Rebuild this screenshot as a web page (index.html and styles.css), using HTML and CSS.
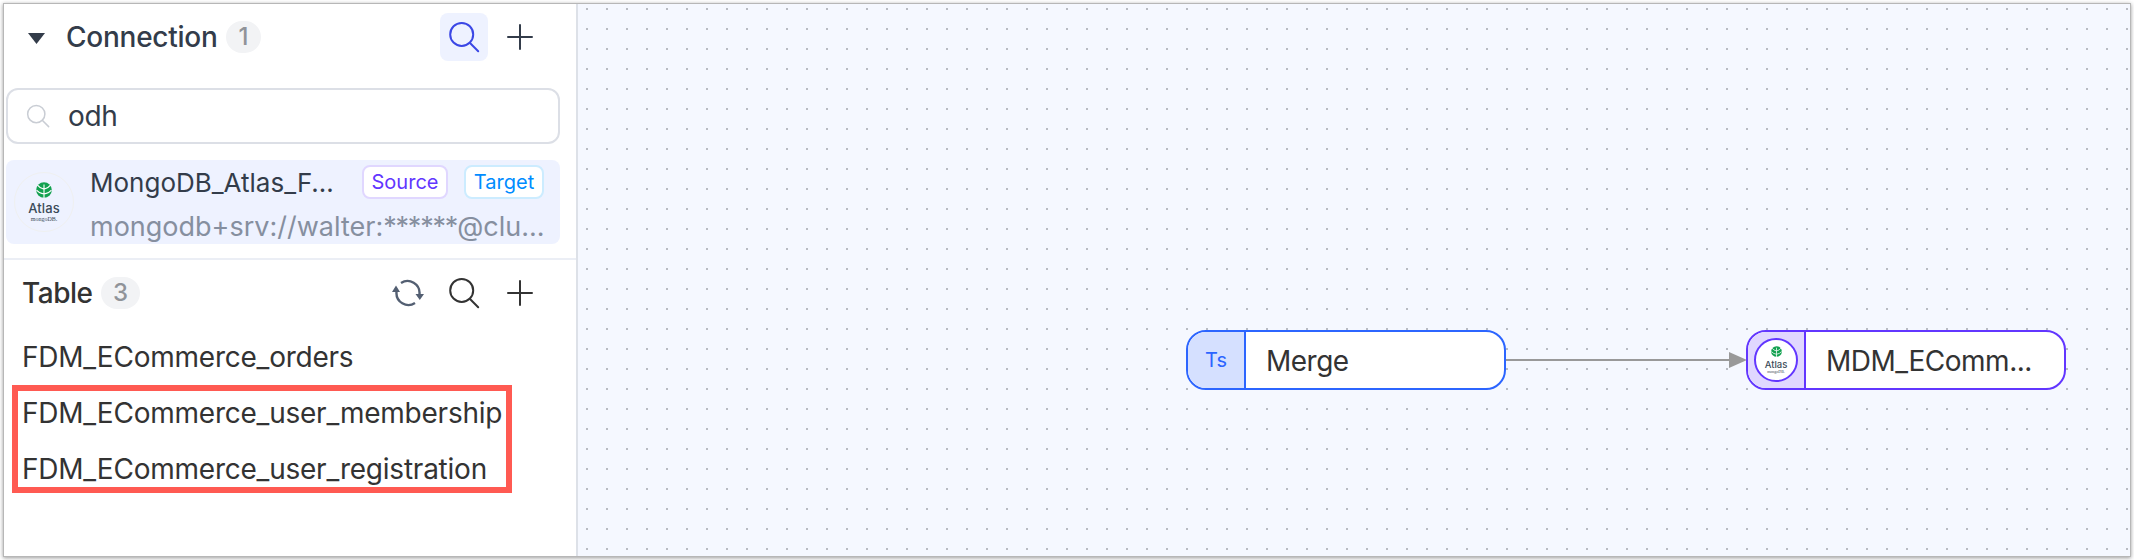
FILE: index.html
```html
<!DOCTYPE html>
<html lang="en">
<head>
<meta charset="utf-8">
<title>Pipeline editor</title>
<link rel="stylesheet" href="styles.css">
</head>
<body>
<svg class="defs" width="0" height="0">
  <symbol id="search" viewBox="0 0 32 32"><circle cx="13.7" cy="13.4" r="11.5"/><path d="M22 22l8.2 8.2"/></symbol>
  <symbol id="plus" viewBox="0 0 26 26"><path d="M1 13h24M13 1v24"/></symbol>
  <symbol id="leaf" viewBox="0 0 16 16">
    <circle cx="8" cy="8" r="7.8" fill="#12a150"/>
    <path d="M8 2.5V16M8 7.2Q4 6.500 1.500 3.2M8 7.2q4-.7 6.500-4M8 12Q3.500 11.500.5 8M8 12q4.500-.5 7.500-4" fill="none" stroke="#fff" stroke-width="1.1"/>
  </symbol>
</svg>
<main class="window">
  <aside class="sidebar">
    <header class="head head-connection">
      <svg class="caret" viewBox="0 0 17 11"><path d="M0 0h17L8.500 11z"/></svg>
      <h2 class="title title-connection">Connection</h2>
      <span class="count">1</span>
      <div class="actions">
        <button class="btn active"><svg class="icon-search"><use href="#search"/></svg></button>
        <button class="btn"><svg class="icon-plus"><use href="#plus"/></svg></button>
      </div>
    </header>
    <div class="search-box">
      <svg class="icon-search small"><use href="#search"/></svg>
      <span class="query">odh</span>
    </div>
    <div class="connection">
      <div class="logo"><svg class="leaf"><use href="#leaf"/></svg><span class="logo-name">Atlas</span><span class="logo-sub">mongoDB.</span></div>
      <div class="info">
        <div class="info-top">
          <span class="conn-name">MongoDB_Atlas_F...</span>
          <span class="tag source">Source</span>
          <span class="tag target">Target</span>
        </div>
        <div class="uri">mongodb+srv://walter:<span class="mask">******</span>@clu...</div>
      </div>
    </div>
    <section class="tables">
      <header class="head head-table">
        <h2 class="title title-table">Table</h2>
        <span class="count wide">3</span>
        <div class="actions">
          <button class="btn"><svg class="icon-refresh" viewBox="0 0 32 28"><path class="arc" d="M9 4a12 12 0 0 1 18.500 11M23 24A12 12 0 0 1 4.500 13"/><path class="tip" d="M23.500 15H32l-4.200 6zM0 13h8L4 6.500z"/></svg></button>
          <button class="btn"><svg class="icon-search"><use href="#search"/></svg></button>
          <button class="btn"><svg class="icon-plus"><use href="#plus"/></svg></button>
        </div>
      </header>
      <ul class="rows">
        <li class="row orders">FDM_ECommerce_orders</li>
        <li class="row membership">FDM_ECommerce_user_membership</li>
        <li class="row registration">FDM_ECommerce_user_registration</li>
      </ul>
      <div class="highlight"></div>
    </section>
  </aside>
  <section class="canvas">
    <svg class="edge" viewBox="0 0 242 20"><path class="wire" d="M0 10h226"/><path class="arrow" d="M223 2l18 8-18 8z"/></svg>
    <div class="node merge"><span class="node-icon">Ts</span><span class="node-name">Merge</span></div>
    <div class="node mdm"><span class="node-icon"><span class="ring"><svg class="leaf"><use href="#leaf"/></svg><span class="logo-name">Atlas</span><span class="logo-sub">mongoDB.</span></span></span><span class="node-name">MDM_EComm...</span></div>
  </section>
</main>
</body>
</html>
```
FILE: styles.css
```css
* { box-sizing: border-box; }
body { margin: 0; padding: 4px; width: 2134px; height: 560px; background: #fff; overflow: hidden; font-family: Inter, "Liberation Sans", sans-serif; color: #333; }
.defs { position: absolute; }
.window { display: flex; width: 2126px; height: 552px; background: #fff; box-shadow: 0 0 0 1px #b7b7b7, 0 1px 4px 1px rgba(0,0,0,.4); }
.sidebar { width: 574px; height: 552px; border-right: 2px solid #dde1e8; flex: none; }
.head { display: flex; align-items: center; padding-right: 32px; }
.head-connection { height: 66px; padding-left: 24px; }
.caret { width: 17px; height: 11px; fill: #333c4a; margin-right: 21px; margin-top: 2px; }
.title { margin: 0; font-size: 28px; line-height: 36px; font-weight: 500; letter-spacing: -.25px; white-space: nowrap; }
.title-connection { width: 152px; color: #333c4a; }
.title-table { width: 71px; letter-spacing: -.5px; }
.count { height: 32px; width: 35px; margin-left: 8px; border-radius: 16px; background: #f2f3f5; color: #909399; font-size: 24px; font-weight: 500; line-height: 32px; text-align: center; }
.count.wide { width: 39px; }
.actions { display: flex; gap: 8px; margin-left: auto; }
.btn { width: 48px; height: 48px; padding: 0; border: 0; border-radius: 8px; background: none; display: flex; align-items: center; justify-content: center; color: #333; }
.head-connection .btn { color: #333c4a; }
.head-connection .btn.active { background: #eef2ff; color: #3b47e5; }
.icon-search { width: 32px; height: 32px; fill: none; stroke: currentColor; stroke-width: 2; stroke-linecap: round; }
.icon-plus { width: 26px; height: 26px; fill: none; stroke: currentColor; stroke-width: 2; stroke-linecap: round; }
.icon-refresh { width: 32px; height: 28px; }
.arc { fill: none; stroke: #535f72; stroke-width: 2.400; }
.tip { fill: #535f72; }
.search-box { margin: 18px 16px 0 2px; height: 56px; border: 2px solid #dcdfe6; border-radius: 12px; display: flex; align-items: center; padding-left: 18px; color: #333c4a; font-size: 28px; }
.query { letter-spacing: -.3px; }
.icon-search.small { width: 24px; height: 24px; color: #c9cdd4; margin-right: 18px; }
.connection { margin: 16px 16px 0 2px; height: 84px; border-radius: 8px; background: #eef2ff; display: flex; padding: 0 16px 0 8px; }
.logo { width: 60px; height: 60px; margin-top: 12px; border: 1px solid #eff0f0; border-radius: 50%; flex: none; display: flex; flex-direction: column; align-items: center; color: #3b4b59; }
.leaf { flex: none; }
.logo .leaf { width: 16px; height: 16px; margin-top: 9px; }
.logo-name { font-size: 13px; line-height: 15px; }
.logo .logo-name { margin-top: 3px; font-weight: 500; letter-spacing: .1px; }
.logo-sub { font: 6px/6px "Liberation Serif", serif; }
.info { margin-left: 16px; width: 454px; flex: none; }
.info-top { display: flex; height: 44px; align-items: center; }
.conn-name { width: 272px; flex: none; font-size: 26px; color: #333c4a; white-space: nowrap; }
.tag { flex: none; height: 34px; border: 2px solid; border-radius: 8px; background: #fff; font-size: 20px; line-height: 30px; text-align: center; }
.source { width: 86px; color: #6236ff; border-color: #e0d7ff; }
.target { width: 80px; margin-left: 16px; color: #008cff; border-color: #ccecff; }
.uri { padding-top: 1px; font-size: 27px; line-height: 43px; color: #868f9f; white-space: nowrap; }
.mask { letter-spacing: -1.2px; }
.tables { position: relative; margin-top: 14px; border-top: 2px solid #ebeef5; }
.head-table { height: 66px; padding-left: 18px; }
.rows { margin: 3px 0 0; padding: 0 0 0 18px; list-style: none; }
.row { height: 56px; line-height: 56px; font-size: 28px; letter-spacing: -.23px; white-space: nowrap; }
.highlight { position: absolute; left: 8px; top: 125px; width: 500px; height: 108px; border: 6px solid #ff5a52; }
.canvas { position: relative; flex: 1; height: 552px; background: #f5f8ff conic-gradient(from 270deg at 2px 2px, #b8bbc2 90deg, transparent 0) 8px 4px / 20px 20px; overflow: hidden; }
.node { position: absolute; top: 326px; width: 320px; height: 60px; display: flex; border: 2px solid; border-radius: 20px; overflow: hidden; background: #fff; }
.merge { left: 608px; border-color: #2c65ff; }
.mdm { left: 1168px; border-color: #6236ff; }
.node-icon { width: 58px; flex: none; border-right: 2px solid #2c65ff; background: #d5e0ff; color: #2c65ff; font-size: 20px; display: flex; align-items: center; justify-content: center; }
.mdm .node-icon { background: #e0d7ff; border-color: #6236ff; }
.node-name { padding-left: 20px; font-size: 28px; letter-spacing: -.5px; line-height: 58px; }
.ring { width: 44px; height: 44px; border: 2px solid #6236ff; border-radius: 50%; background: #fff; display: flex; flex-direction: column; align-items: center; color: #3b4b59; }
.ring .leaf { width: 11px; height: 11px; margin-top: 6px; }
.ring .logo-name { font-size: 9.500px; font-weight: 500; line-height: 11px; margin-top: 2px; }
.ring .logo-sub { font-size: 4px; line-height: 4px; }
.edge { position: absolute; left: 928px; top: 346px; width: 242px; height: 20px; }
.wire { stroke: #999; stroke-width: 2; }
.arrow { fill: #999; }
```
